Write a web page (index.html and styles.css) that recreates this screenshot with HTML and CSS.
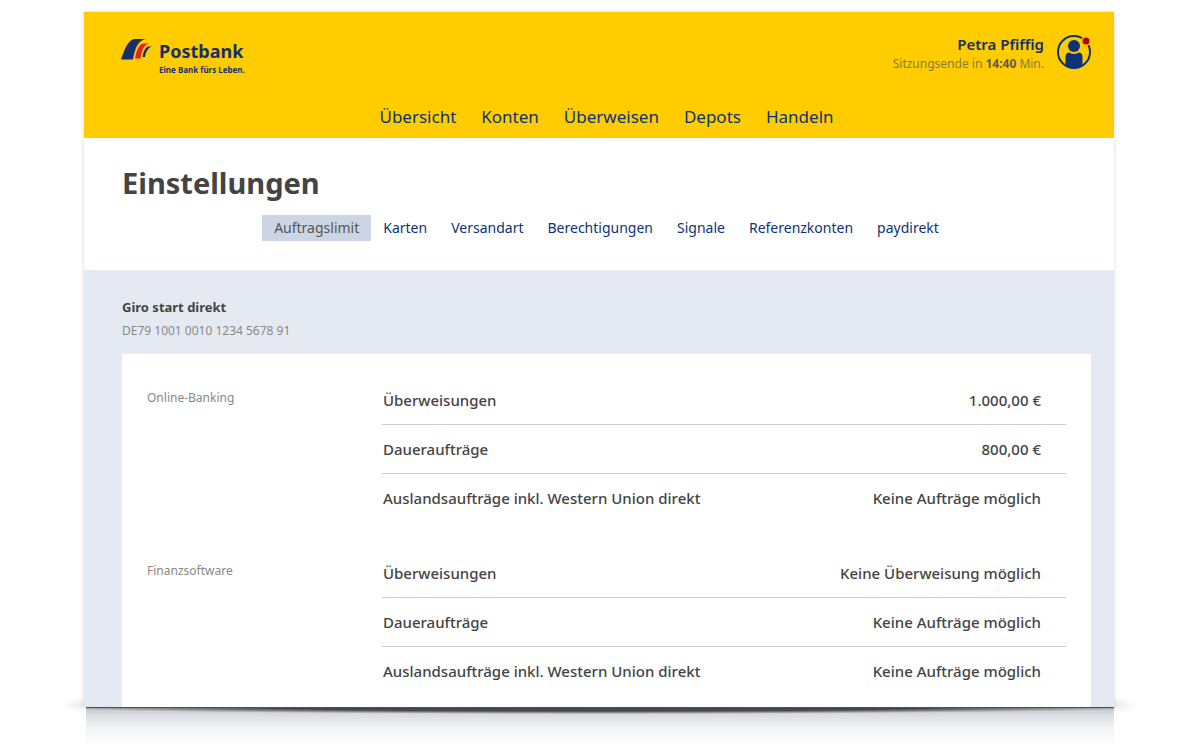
FILE: index.html
```html
<!DOCTYPE html>
<html lang="de">
<head>
<meta charset="utf-8">
<title>Postbank – Einstellungen</title>
<link rel="stylesheet" href="styles.css">
</head>
<body>
<div class="stage">
  <div class="app">
    <header class="masthead">
      <div class="masthead-top">
        <a class="brand" href="#">
          <svg class="brand-mark" width="31" height="22" viewBox="0 0 31 22" aria-hidden="true">
            <path fill="#16306b" d="M0 21.500C3 13 7 1 14 1h11C17 2.500 14 10 12 21.500z"/>
            <path fill="#e2232e" d="M14 20.500C15.500 12 18 6.500 22 5.500h6C23 7 20.500 12 19.500 20.500z"/>
            <path fill="#16306b" d="M21.500 19C22.500 13 24.500 9.500 27 8.500h4C27.500 9.500 25 13 24 19z"/>
          </svg>
          <span class="brand-text">
            <span class="brand-name">Postbank</span>
            <span class="brand-claim">Eine Bank fürs Leben.</span>
          </span>
        </a>
        <div class="session">
          <div class="session-text">
            <span class="session-user">Petra Pfiffig</span>
            <span class="session-end">Sitzungsende in <b>14:40</b> Min.</span>
          </div>
          <button class="avatar" type="button" aria-label="Profil">
            <svg width="36" height="36" viewBox="0 0 36 36" aria-hidden="true">
              <circle cx="18" cy="18" r="16" fill="none" stroke="#0d3278" stroke-width="2"/>
              <circle cx="18" cy="12" r="6" fill="#0d3278"/>
              <path fill="#0d3278" d="M9.500 31.500V23q0-4.500 4-4.500 2 1.500 4.500 1.500t4.500-1.500q4 0 4 4.500v8.500Q22.500 34 18 34t-8.500-2.500z"/>
              <circle cx="30" cy="7" r="5" fill="#fc0"/>
              <circle cx="30" cy="7" r="3.500" fill="#b40010"/>
            </svg>
          </button>
        </div>
      </div>
      <nav class="main-nav">
        <a href="#">Übersicht</a>
        <a href="#">Konten</a>
        <a href="#">Überweisen</a>
        <a href="#">Depots</a>
        <a href="#">Handeln</a>
      </nav>
    </header>

    <section class="heading">
      <h1>Einstellungen</h1>
      <nav class="tabs">
        <a class="active" href="#" aria-current="page">Auftragslimit</a>
        <a href="#">Karten</a>
        <a href="#">Versandart</a>
        <a href="#">Berechtigungen</a>
        <a href="#">Signale</a>
        <a href="#">Referenzkonten</a>
        <a href="#">paydirekt</a>
      </nav>
    </section>

    <main class="content">
      <h2>Giro start direkt</h2>
      <p class="iban">DE79 1001 0010 1234 5678 91</p>
      <div class="card">
        <section class="group">
          <h3 id="online">Online-Banking</h3>
          <table aria-labelledby="online">
            <tr><th scope="row">Überweisungen</th><td>1.000,00 €</td></tr>
            <tr><th scope="row">Daueraufträge</th><td>800,00 €</td></tr>
            <tr><th scope="row">Auslandsaufträge inkl. Western Union direkt</th><td>Keine Aufträge möglich</td></tr>
          </table>
        </section>
        <section class="group">
          <h3 id="software">Finanzsoftware</h3>
          <table aria-labelledby="software">
            <tr><th scope="row">Überweisungen</th><td>Keine Überweisung möglich</td></tr>
            <tr><th scope="row">Daueraufträge</th><td>Keine Aufträge möglich</td></tr>
            <tr><th scope="row">Auslandsaufträge inkl. Western Union direkt</th><td>Keine Aufträge möglich</td></tr>
          </table>
        </section>
      </div>
    </main>
  </div>
  <div class="floor"></div>
</div>
</body>
</html>
```

FILE: styles.css
```css
* { box-sizing: border-box; }

body {
  margin: 0;
  background: #fff;
  color: #444;
  font: 500 15px/24px "Noto Sans", "Open Sans", sans-serif;
}

a { color: #0d3278; text-decoration: none; }
h1, h2, h3, p { margin: 0; }

.stage { padding: 12px 86px 0 84px; }

.app {
  position: relative;
  background: #fff;
  box-shadow: 0 0 4px rgba(0, 0, 0, .16);
}

/* soft wisps beside the lower corners */
.app::before,
.app::after {
  content: "";
  position: absolute;
  bottom: -6px;
  width: 24px;
  height: 16px;
}
.app::before {
  right: 100%;
  background: radial-gradient(ellipse at 100% 50%, rgba(0, 0, 0, .08), transparent 70%);
}
.app::after {
  left: 100%;
  background: radial-gradient(ellipse at 0 50%, rgba(0, 0, 0, .08), transparent 70%);
}

.masthead {
  background: #fc0;
  padding: 20px 22px 8px 37px;
}

.masthead-top {
  display: flex;
  justify-content: space-between;
  align-items: flex-start;
}

.brand {
  display: flex;
  gap: 7px;
  padding-top: 6px;
  color: #16306b;
}

.brand-text { display: flex; flex-direction: column; }
.brand-name { font-size: 18px; line-height: 26px; font-weight: 700; }
.brand-claim { font-size: 8px; line-height: 12px; font-weight: 700; }

.session { display: flex; align-items: center; gap: 12px; }

.session-text {
  display: flex;
  flex-direction: column;
  align-items: flex-end;
}

.session-user {
  color: #16306b;
  font-size: 15px;
  line-height: 24px;
  font-weight: 600;
}

.session-end {
  color: #857a48;
  font-size: 12px;
  line-height: 16px;
  font-weight: 400;
}
.session-end b { color: #5c5b54; }

.avatar {
  display: flex;
  padding: 0;
  border: 0;
  background: none;
  cursor: pointer;
}

.main-nav {
  display: flex;
  justify-content: center;
  gap: 25px;
  padding-top: 28px;
  font-size: 17px;
  line-height: 26px;
  font-weight: 400;
}

.heading { padding: 25px 23px 29px 38px; }

h1 {
  font-size: 29px;
  line-height: 40px;
  font-weight: 700;
}

.tabs {
  display: flex;
  justify-content: center;
  padding-top: 12px;
  font-size: 14px;
  line-height: 26px;
  font-weight: 400;
}
.tabs a { padding: 0 12px; }
.tabs .active { background: #ccd5e3; color: #555; }

.content {
  background: #e5eaf2;
  padding: 25px 23px 0 38px;
}

h2 { font-size: 13px; line-height: 24px; font-weight: 700; }

.iban {
  color: #888;
  font-size: 12px;
  line-height: 24px;
  font-weight: 400;
}

.card {
  display: flex;
  flex-direction: column;
  gap: 26px;
  margin-top: 11px;
  padding: 22px 25px 11px;
  background: #fff;
}

.group {
  display: grid;
  grid-template-columns: 235px 1fr;
}

h3 {
  padding-top: 10px;
  color: #888;
  font-size: 12px;
  line-height: 24px;
  font-weight: 400;
}

table { width: 100%; border-collapse: separate; border-spacing: 0; }

th, td {
  height: 49px;
  padding: 0 25px 0 1px;
  border-bottom: 1px solid #ccc;
  font-weight: 500;
  text-align: left;
}
td { text-align: right; }
tr:last-child th, tr:last-child td { border-bottom-color: transparent; }

.floor {
  height: 42px;
  margin: 0 0 0 2px;
  background:
    linear-gradient(#555 0 1px, transparent 1px),
    radial-gradient(ellipse 55% 7px at 50% 0, rgba(60, 60, 60, .9) 60%, transparent),
    linear-gradient(#c4c7cb, #dfe2e4 10px, #f3f5f5 22px, #fff 40px);
}
```
